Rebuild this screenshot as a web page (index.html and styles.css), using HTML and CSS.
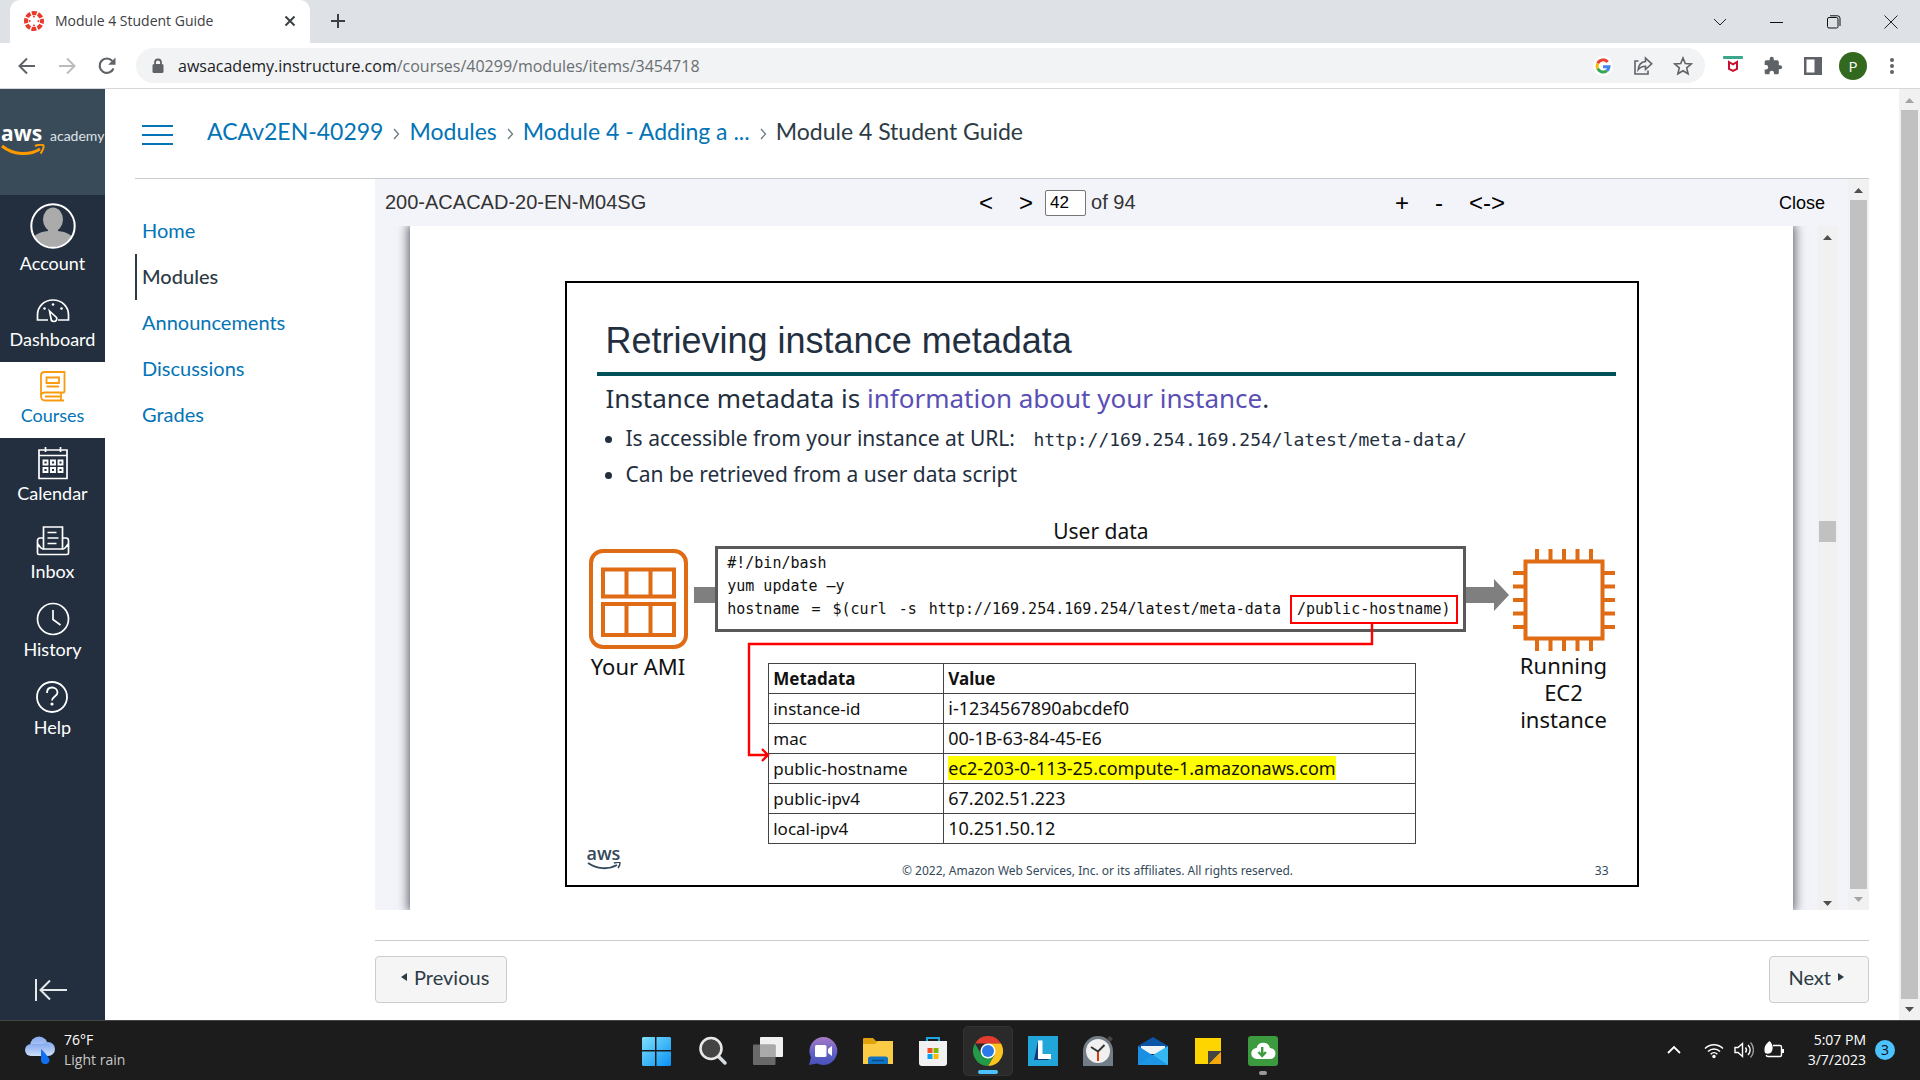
FILE: index.html
```html
<!DOCTYPE html>
<html lang="en">
<head>
<meta charset="utf-8">
<title>Module 4 Student Guide</title>
<link rel="stylesheet" href="styles.css">
</head>
<body>
<div class="screen">
  <header class="tabstrip">
    <div class="tab">
      <svg width="20" height="20" viewBox="0 0 20 20"><circle cx="10" cy="10" r="8" fill="none" stroke="#e8392b" stroke-width="4" stroke-dasharray="4.9 1.38" stroke-dashoffset="2.4"/><g fill="#e8392b"><circle cx="10" cy="5.6" r="1"/><circle cx="10" cy="14.4" r="1"/><circle cx="5.6" cy="10" r="1"/><circle cx="14.4" cy="10" r="1"/></g></svg>
      <span class="tab-title">Module 4 Student Guide</span>
      <button class="plain" aria-label="Close tab"><svg width="12" height="12" viewBox="0 0 12 12"><path d="M1.5 1.5l9 9M10.5 1.5l-9 9" stroke="#3c4043" stroke-width="2"/></svg></button>
    </div>
    <button class="plain new-tab" aria-label="New tab"><svg width="16" height="16" viewBox="0 0 16 16"><path d="M8 1v14M1 8h14" stroke="#3c4043" stroke-width="2"/></svg></button>
    <div class="window-buttons">
      <button class="plain" aria-label="Search tabs"><svg width="14" height="14" viewBox="0 0 14 14"><path d="M1 4l6 6 6-6" fill="none" stroke="#222"/></svg></button>
      <button class="plain" aria-label="Minimize"><svg width="14" height="14" viewBox="0 0 14 14"><path d="M0 7.500h13" stroke="#111"/></svg></button>
      <button class="plain" aria-label="Restore"><svg width="14" height="14" viewBox="0 0 14 14"><rect x=".5" y="2.500" width="10.500" height="10.500" rx="1.500" fill="none" stroke="#111"/><path d="M3 .8h7.500a2.500 2.500 0 0 1 2.500 2.500V11" fill="none" stroke="#111"/></svg></button>
      <button class="plain" aria-label="Close window"><svg width="14" height="14" viewBox="0 0 14 14"><path d="M.5.5l13 13M13.500.5l-13 13" stroke="#222"/></svg></button>
    </div>
  </header>

  <div class="toolbar">
    <button class="plain" aria-label="Back"><svg width="20" height="20" viewBox="0 0 20 20"><path d="M18 10H3M10 2.500L2.500 10l7.500 7.500" fill="none" stroke="#5f6368" stroke-width="2"/></svg></button>
    <button class="plain" aria-label="Forward"><svg width="20" height="20" viewBox="0 0 20 20"><path d="M2 10h15M10 2.500l7.500 7.500-7.500 7.500" fill="none" stroke="#babcbe" stroke-width="2"/></svg></button>
    <button class="plain" aria-label="Reload"><svg width="20" height="20" viewBox="0 0 20 20"><path d="M16.500 12.500A7.200 7.200 0 1 1 15.300 5" fill="none" stroke="#5f6368" stroke-width="2.200"/><path d="M18.500 1.500v7.300h-7.300z" fill="#5f6368"/></svg></button>
    <div class="omnibox">
      <svg width="14" height="16" viewBox="0 0 14 16"><path d="M4 7V4.500a3 3 0 0 1 6 0V7" fill="none" stroke="#5f6368" stroke-width="1.800"/><rect x="1.500" y="6" width="11" height="9" rx="1.500" fill="#5f6368"/></svg>
      <div class="url">awsacademy.instructure.com<span>/courses/40299/modules/items/3454718</span></div>
      <button class="plain" aria-label="Search with Google"><svg width="20" height="20" viewBox="0 0 20 20"><circle cx="10" cy="10" r="10" fill="#fff"/><g fill="none" stroke-width="3"><path d="M14.700 6A6 6 0 0 0 4.700 7.300" stroke="#ea4335"/><path d="M4.700 7.300a6 6 0 0 0 0 5.400" stroke="#fbbc05"/><path d="M4.700 12.700a6 6 0 0 0 9.300 1.900" stroke="#34a853"/><path d="M14 14.600a6 6 0 0 0 2-3.800h-6" stroke="#4285f4"/></g></svg></button>
      <button class="plain" aria-label="Share"><svg width="20" height="20" viewBox="0 0 20 20"><g fill="none" stroke="#5f6368" stroke-width="1.600"><path d="M5.500 5H2v13h13v-3.500"/><path d="M12.500 5.500V2l6.200 5.800-6.200 5.700v-3.300c-3.500 0-5.500 1-7.300 3.300.4-4.200 2.800-7.500 7.300-8z"/></g></svg></button>
      <button class="plain" aria-label="Bookmark"><svg width="20" height="20" viewBox="0 0 20 20"><path d="M10 2l2.300 5.500 6 .5-4.600 3.900 1.400 5.900L10 14.700l-5.100 3.100 1.400-5.900L1.700 8l6-.5z" fill="none" stroke="#5f6368" stroke-width="1.600"/></svg></button>
    </div>
    <div class="extensions">
      <button class="plain" aria-label="Site safety"><svg width="20" height="20" viewBox="0 0 20 20"><rect width="20" height="3" rx="1" fill="#3da58a"/><path d="M6 6l4 2.300L14 6v7l-4 2-4-2z" fill="none" stroke="#c8102e" stroke-width="2"/></svg></button>
      <button class="plain" aria-label="Extensions"><svg width="20" height="20" viewBox="0 0 24 24"><path d="M20.500 11H19V7a2 2 0 0 0-2-2h-4V3.500a2.500 2.500 0 0 0-5 0V5H4a2 2 0 0 0-2 2v3.800h1.500a2.700 2.700 0 0 1 0 5.400H2V20a2 2 0 0 0 2 2h3.800v-1.500a2.700 2.700 0 0 1 5.400 0V22H17a2 2 0 0 0 2-2v-4h1.500a2.500 2.500 0 0 0 0-5z" fill="#5f6368"/></svg></button>
      <button class="plain" aria-label="Side panel"><svg width="20" height="20" viewBox="0 0 20 20"><path d="M1 1h18v18H1zM3.500 3.500v13h8v-13z" fill="#5f6368" fill-rule="evenodd"/></svg></button>
      <button class="plain avatar" aria-label="Profile">P</button>
      <button class="plain" aria-label="Menu"><svg width="6" height="18" viewBox="0 0 6 18"><g fill="#5f6368"><circle cx="3" cy="3" r="2"/><circle cx="3" cy="9" r="2"/><circle cx="3" cy="15" r="2"/></g></svg></button>
    </div>
  </div>

  <div class="page">
    <nav class="rail" aria-label="Global">
      <a class="brand" href="#">
        <span class="aws"><b>aws</b><svg width="44" height="12" viewBox="0 0 44 12"><path d="M1 2c11 9 27 10 38 3" fill="none" stroke="#f90" stroke-width="3"/><path d="M34 2c4-2 8-1.500 8.500-.5s-.5 5-3 8" fill="none" stroke="#f90" stroke-width="2"/></svg></span>
        <span class="academy">academy</span>
      </a>
      <a class="rail-item account" href="#"><svg width="46" height="46" viewBox="0 0 46 46"><defs><clipPath id="face"><circle cx="23" cy="23" r="21"/></clipPath></defs><g clip-path="url(#face)" fill="#ababab"><ellipse cx="23" cy="16.500" rx="10" ry="12"/><path d="M18 24h10v4c9 1 14 4 15 8v12H3V36c1-4 6-7 15-8z"/></g><circle cx="23" cy="23" r="21.700" fill="none" stroke="#fff" stroke-width="2"/></svg><span>Account</span></a>
      <a class="rail-item" href="#"><svg width="34" height="32" viewBox="0 0 34 32"><g fill="none" stroke="#fff" stroke-width="1.700"><path d="M12 26H1.500v-5C1.500 12.500 8 6 17 6s15.500 6.500 15.500 15v5H22"/><path d="M13.500 17l7 6.500c1 2-.5 4-2.500 4s-3-1.500-3-3z"/></g><g fill="#fff"><circle cx="17" cy="10.500" r="1.300"/><circle cx="8.500" cy="14.500" r="1.300"/><circle cx="25.500" cy="14.500" r="1.300"/></g></svg><span>Dashboard</span></a>
      <a class="rail-item current" href="#"><svg width="34" height="32" viewBox="0 0 34 32"><g fill="none" stroke="#f99b11" stroke-width="1.800"><path d="M28.500 22.500V2H9C6 2 5 3.500 5 5.500V26c0 3 1.500 4.500 4 4.500h19M5 26c0-2.500 1.500-3.500 4-3.500h19.500M9 26.500h15M25 23v7"/><path d="M10.500 7.500h12.500v5.500H10.500zM10.500 16.500h12.500"/></g></svg><span>Courses</span></a>
      <a class="rail-item" href="#"><svg width="34" height="34" viewBox="0 0 34 34"><g fill="none" stroke="#fff" stroke-width="1.700"><path d="M3 4h28v28.500H3zM3 9.500h28M9.500 1v5M24.500 1v5"/><path d="M7.500 14.500h4v4h-4zM15 14.500h4v4h-4zM22.500 14.500h4v4h-4zM7.500 22h4v4h-4zM15 22h4v4h-4zM22.500 22h4v4h-4z" stroke-width="1.900"/></g></svg><span>Calendar</span></a>
      <a class="rail-item" href="#"><svg width="34" height="34" viewBox="0 0 34 34"><g fill="none" stroke="#fff" stroke-width="1.700"><path d="M7.500 25V3h19v22z"/><path d="M7.500 14H4a2.500 2.500 0 0 0-2.500 2.500V29c0 1 .5 1.500 1.500 1.500h28c1 0 1.500-.5 1.500-1.500V16.500A2.500 2.500 0 0 0 30 14h-3.500M1.500 19.500l3 4c1 1.200 2 1.500 3 1.500M32.500 19.500l-3 4c-1 1.200-2 1.500-3 1.500M11.500 8.500h9M11.500 14h11M11.500 19.500h9"/></g></svg><span>Inbox</span></a>
      <a class="rail-item" href="#"><svg width="34" height="34" viewBox="0 0 34 34"><g fill="none" stroke="#fff" stroke-width="1.700"><circle cx="17" cy="17" r="15.500"/><path d="M17 8v9.500l7.500 5.500"/></g></svg><span>History</span></a>
      <a class="rail-item" href="#"><svg width="34" height="34" viewBox="0 0 34 34"><g fill="none" stroke="#fff" stroke-width="1.800"><circle cx="16" cy="17" r="15"/><path d="M11 13c0-3.500 2-5.500 5-5.500s5.500 2 5.500 5c0 4-5.500 4-5.500 8"/></g><circle cx="16" cy="24" r="1.600" fill="#fff"/></svg><span>Help</span></a>
      <button class="plain collapse" aria-label="Minimize navigation"><svg width="34" height="24" viewBox="0 0 34 24"><path d="M2 1v22M33 12H7M16 2.500L6.500 12l9.500 9.500" fill="none" stroke="#e6e8ea" stroke-width="2"/></svg></button>
    </nav>

    <div class="main">
      <div class="crumbs">
        <button class="plain hamburger" aria-label="Course navigation"><svg width="31" height="20" viewBox="0 0 31 20"><path d="M0 1h31M0 10h31M0 19h31" stroke="#0374b5" stroke-width="1.800"/></svg></button>
        <a href="#">ACAv2EN-40299</a><svg class="sep" width="7" height="12" viewBox="0 0 7 12"><path d="M1 1l4.500 5L1 11" fill="none" stroke="#6b7780" stroke-width="1.300"/></svg><a href="#">Modules</a><svg class="sep" width="7" height="12" viewBox="0 0 7 12"><path d="M1 1l4.500 5L1 11" fill="none" stroke="#6b7780" stroke-width="1.300"/></svg><a href="#">Module 4 - Adding a ...</a><svg class="sep" width="7" height="12" viewBox="0 0 7 12"><path d="M1 1l4.500 5L1 11" fill="none" stroke="#6b7780" stroke-width="1.300"/></svg><span>Module 4 Student Guide</span>
      </div>
      <div class="columns">
        <nav class="course-nav" aria-label="Course">
          <a href="#">Home</a>
          <a class="active" href="#">Modules</a>
          <a href="#">Announcements</a>
          <a href="#">Discussions</a>
          <a href="#">Grades</a>
        </nav>
        <main class="content">
          <section class="viewer">
            <div class="viewer-main">
              <div class="viewer-bar">
                <div class="doc-name">200-ACACAD-20-EN-M04SG</div>
                <div class="pager">
                  <button class="plain">&lt;</button>
                  <button class="plain">&gt;</button>
                  <label><input type="text" value="42" aria-label="Page"> of 94</label>
                </div>
                <div class="zoomer">
                  <button class="plain">+</button>
                  <button class="plain">-</button>
                  <button class="plain">&lt;-&gt;</button>
                </div>
                <button class="plain close">Close</button>
              </div>
              <div class="viewer-body">
                <div class="paper">
                  <article class="slide">
                    <h1>Retrieving instance metadata</h1>
                    <p class="lead">Instance metadata is <em>information about your instance</em>.</p>
                    <ul>
                      <li>Is accessible from your instance at URL: <code>http://169.254.169.254/latest/meta-data/</code></li>
                      <li>Can be retrieved from a user data script</li>
                    </ul>
                    <div class="diagram">
                      <div class="node ami">
                        <svg width="99" height="100" viewBox="0 0 99 100"><g fill="none" stroke="#df6b15" stroke-width="4"><rect x="2" y="2" width="95" height="96" rx="12"/><path d="M14 20.500h71v27H14zM37.500 20.500v27M61.500 20.500v27M14 55h71v31H14zM37.500 55v31M61.500 55v31"/></g></svg>
                        <span>Your AMI</span>
                      </div>
                      <div class="shaft"></div>
                      <div class="middle">
                        <h2>User data</h2>
                        <div class="script">
                          <div>#!/bin/bash</div>
                          <div>yum update –y</div>
                          <div class="command"><span>hostname</span><span>=</span><span>$(curl</span><span>-s</span><span>http://169.254.169.254/latest/meta-data</span><span class="path">/public-hostname)</span></div>
                        </div>
                        <table>
                          <thead><tr><th>Metadata</th><th>Value</th></tr></thead>
                          <tbody>
                            <tr><td>instance-id</td><td>i-1234567890abcdef0</td></tr>
                            <tr><td>mac</td><td>00-1B-63-84-45-E6</td></tr>
                            <tr><td>public-hostname</td><td><mark>ec2-203-0-113-25.compute-1.amazonaws.com</mark></td></tr>
                            <tr><td>public-ipv4</td><td>67.202.51.223</td></tr>
                            <tr><td>local-ipv4</td><td>10.251.50.12</td></tr>
                          </tbody>
                        </table>
                        <svg class="connector" width="748" height="240" viewBox="0 0 748 240"><path d="M657 106v21H34v111h18M47 232l6 6-6 6" fill="none" stroke="#f00" stroke-width="2.400"/></svg>
                      </div>
                      <svg class="arrow" width="44" height="32" viewBox="0 0 44 32"><path d="M0 8h28V0l15 16-15 16v-8H0z" fill="#7f7f7f"/></svg>
                      <div class="node ec2">
                        <svg width="102" height="102" viewBox="0 0 102 102"><g fill="none" stroke="#df6b15" stroke-width="4"><path d="M12.500 12.500h77v77h-77z"/><path d="M24 0v12M37.500 0v12M51 0v12M64.500 0v12M78 0v12M24 90v12M37.500 90v12M51 90v12M64.500 90v12M78 90v12M0 24h12M0 37.500h12M0 51h12M0 64.500h12M0 78h12M90 24h12M90 37.500h12M90 51h12M90 64.500h12M90 78h12"/></g></svg>
                        <span>Running EC2 instance</span>
                      </div>
                    </div>
                    <footer class="slide-foot">
                      <span class="aws small"><b>aws</b><svg width="34" height="8" viewBox="0 0 34 8"><path d="M1 1c9 6 20 7 29 2" fill="none" stroke="#34495a" stroke-width="2"/><path d="M27 1c4-1.300 6-1 6 0s-.5 3-2 5" fill="none" stroke="#34495a" stroke-width="1.500"/></svg></span>
                      <span>© 2022, Amazon Web Services, Inc. or its affiliates. All rights reserved.</span>
                      <span class="num">33</span>
                    </footer>
                  </article>
                </div>
                <div class="scrollbar inner">
                  <svg width="21" height="21" viewBox="0 0 21 21"><path d="M10.500 9l4.500 5H6z" fill="#505050"/></svg>
                  <div class="thumb"></div>
                  <svg class="end" width="21" height="21" viewBox="0 0 21 21"><path d="M10.500 17L15 12H6z" fill="#505050"/></svg>
                </div>
              </div>
            </div>
            <div class="scrollbar outer">
              <svg width="21" height="21" viewBox="0 0 21 21"><path d="M10.500 9l4.500 5H6z" fill="#505050"/></svg>
              <div class="thumb"></div>
              <svg width="21" height="21" viewBox="0 0 21 21"><path d="M10.500 13L15 8H6z" fill="#a3a3a3"/></svg>
            </div>
          </section>
          <div class="sequence">
            <button><svg width="6" height="8" viewBox="0 0 6 8"><path d="M6 0v8L0 4z" fill="#2d3b45"/></svg>Previous</button>
            <button>Next<svg width="6" height="8" viewBox="0 0 6 8"><path d="M0 0v8l6-4z" fill="#2d3b45"/></svg></button>
          </div>
        </main>
      </div>
    </div>
    <div class="scrollbar window">
      <svg width="21" height="21" viewBox="0 0 21 21"><path d="M10.500 9l4.500 5H6z" fill="#a3a3a3"/></svg>
      <div class="thumb"></div>
      <svg width="21" height="21" viewBox="0 0 21 21"><path d="M10.500 13L15 8H6z" fill="#505050"/></svg>
    </div>
  </div>

  <footer class="taskbar">
    <button class="plain weather">
      <svg width="32" height="28" viewBox="0 0 32 28"><defs><linearGradient id="cl" x1="0" y1="0" x2="0" y2="1"><stop offset="0" stop-color="#86aaf0"/><stop offset="1" stop-color="#cfdff8"/></linearGradient></defs><g fill="url(#cl)"><circle cx="15" cy="9.500" r="9"/><circle cx="24" cy="13" r="7"/><rect x="1" y="8" width="26" height="12" rx="6"/></g><path d="M17 13c5 5 8.500 9 8.500 11.500a4.300 4.300 0 0 1-8.500 0z" fill="#0f6fee"/></svg>
      <span><span>76°F</span><span class="dim">Light rain</span></span>
    </button>
    <div class="apps">
      <button class="plain start" aria-label="Start"><svg width="30" height="30" viewBox="0 0 30 30"><defs><linearGradient id="wn" gradientUnits="userSpaceOnUse" x1="1" y1="1" x2="29" y2="30"><stop offset="0" stop-color="#7ee0fb"/><stop offset="1" stop-color="#0a93f5"/></linearGradient></defs><path d="M2 1h12v13H1V2zM15.500 1H29l1 1v12H15.500zM1 15.500h13V30H2l-1-1zM15.500 15.500H30V29l-1 1H15.500z" fill="url(#wn)"/></svg></button>
      <button class="plain" aria-label="Search"><svg width="30" height="30" viewBox="0 0 30 30"><path d="M20 20l7 7" stroke="#d6dade" stroke-width="3.500" stroke-linecap="round"/><circle cx="13" cy="12.500" r="10.500" fill="#444" stroke="#e6e8ea" stroke-width="2.600"/></svg></button>
      <button class="plain" aria-label="Task view"><svg width="30" height="30" viewBox="0 0 30 30"><rect x="7" y="1" width="23" height="20" rx="1" fill="#f0f0f0"/><rect y="8.500" width="22.500" height="20.500" rx="1" fill="#777" opacity=".85"/><path d="M7 9h15.500v12H7z" fill="#aaa"/></svg></button>
      <button class="plain" aria-label="Chat"><svg width="30" height="30" viewBox="0 0 30 30"><defs><linearGradient id="ch" x1="0" y1="0" x2="0" y2="1"><stop offset="0" stop-color="#a87bc4"/><stop offset=".6" stop-color="#5d5fc8"/><stop offset="1" stop-color="#4a50b8"/></linearGradient></defs><path d="M15 1a14 14 0 1 1-6 26.500L1 29l2-7.500A14 14 0 0 1 15 1z" fill="url(#ch)"/><rect x="7" y="9" width="11.500" height="12" rx="1.500" fill="#fff"/><path d="M20 13l4-3v10l-4-3z" fill="#fff"/></svg></button>
      <button class="plain" aria-label="File Explorer"><svg width="30" height="30" viewBox="0 0 30 30"><path d="M0 3.500C0 2 .5 2 1.500 2H10l3 3h15v8H0z" fill="#e0a10b"/><path d="M0 8h12l3-3h15v23H0z" fill="#fccb45"/><path d="M5 28v-5c0-1.500.8-2.500 2.500-2.500h15c1.700 0 2.500 1 2.500 2.500v5z" fill="#1173c4"/><path d="M9 24.500h12" stroke="#0a4a86" stroke-width="1.300"/></svg></button>
      <button class="plain" aria-label="Microsoft Store"><svg width="30" height="30" viewBox="0 0 30 30"><path d="M9 8V2h12v6" fill="none" stroke="#1ca7e0" stroke-width="2"/><path d="M1 5h28v22a3 3 0 0 1-3 3H4a3 3 0 0 1-3-3z" fill="#f1f1f1"/><path d="M9.500 12h5v5h-5z" fill="#f25022"/><path d="M15.500 12h5v5h-5z" fill="#7fba00"/><path d="M9.500 18h5v5h-5z" fill="#00a4ef"/><path d="M15.500 18h5v5h-5z" fill="#ffb900"/></svg></button>
      <button class="plain active" aria-label="Google Chrome"><svg width="30" height="30" viewBox="0 0 30 30"><path d="M2 7.500A15 15 0 0 1 28 7.500H15z" fill="#e33b2e"/><path d="M28 7.500A15 15 0 0 1 15 30l6.500-11.300L15 7.500z" fill="#fcc31e"/><path d="M2 7.500A15 15 0 0 0 15 30l6.500-11.300H8.500z" fill="#239a48"/><circle cx="15" cy="15" r="7.500" fill="#fff"/><circle cx="15" cy="15" r="6" fill="#2b79e8"/></svg></button>
      <button class="plain" aria-label="Lexia"><svg width="30" height="30" viewBox="0 0 30 30"><path d="M0 0h30v30H0z" fill="#22a5d8"/><path d="M10 5l-4 19h14l2-2H12z" fill="#113a78"/><path d="M10 4.500h4.500V18H23v5H10z" fill="#fff"/></svg></button>
      <button class="plain" aria-label="Clock"><svg width="30" height="30" viewBox="0 0 30 30"><path d="M24 2l3-2 3 3-3 3z" fill="#444"/><path d="M0 15a15 15 0 0 1 30 0v15H0z" fill="#727d88"/><circle cx="15" cy="15" r="12" fill="#f0f0f0"/><path d="M8 11l7 4.500 6.500-6.500" fill="none" stroke="#333" stroke-width="2"/><path d="M15 16v9" stroke="#d83b01" stroke-width="2"/></svg></button>
      <button class="plain" aria-label="Mail"><svg width="30" height="30" viewBox="0 0 30 30"><path d="M0 10L15 1l15 9v3H0z" fill="#0a55a5"/><path d="M3 10h24v8H3z" fill="#f0f3f6"/><path d="M0 10l30 19H0z" fill="#1a8fe3"/><path d="M30 10v19H4l11-10z" fill="#34b7f2"/><path d="M15 19L0 29h30z" fill="#1e96e6"/></svg></button>
      <button class="plain" aria-label="Sticky Notes"><svg width="30" height="30" viewBox="0 0 30 30"><path d="M2 2h26v26H2z" fill="#ffd500"/><path d="M15 15h13v1L16 28h-1z" fill="#444"/><path d="M28 16v12H16z" fill="#f5a80c"/></svg></button>
      <button class="plain running" aria-label="Cloud download"><svg width="30" height="30" viewBox="0 0 30 30"><rect width="30" height="30" rx="3" fill="#3c9b3f"/><path d="M9 23a5.500 5.500 0 0 1-.5-11 7 7 0 0 1 13.500 0 5.500 5.500 0 0 1 0 11z" fill="#fff"/><path d="M14.200 11v8M10.500 16l3.700 4 3.700-4" fill="none" stroke="#3c9b3f" stroke-width="2.400"/></svg></button>
    </div>
    <div class="tray">
      <button class="plain" aria-label="Hidden icons"><svg width="14" height="10" viewBox="0 0 14 10"><path d="M1 8l6-6 6 6" fill="none" stroke="#fff" stroke-width="1.800"/></svg></button>
      <button class="plain status" aria-label="Network, volume, battery">
        <svg width="20" height="18" viewBox="0 0 20 18"><g fill="none" stroke="#fff" stroke-width="1.500"><path d="M1 7.500a12.700 12.700 0 0 1 18 0M4 10.500a8.500 8.500 0 0 1 12 0M6.700 13.200a4.700 4.700 0 0 1 6.600 0"/></g><circle cx="10" cy="15.500" r="1.700" fill="#fff"/></svg>
        <svg width="20" height="18" viewBox="0 0 20 18"><g fill="none" stroke="#fff" stroke-width="1.400"><path d="M1 6.500h3L8.500 2.500v13L4 11.500H1zM11.500 6.500a4 4 0 0 1 0 5M14 4a7 7 0 0 1 0 10"/><path d="M16.500 1.500a11 11 0 0 1 0 15" stroke="#999"/></g></svg>
        <svg width="20" height="18" viewBox="0 0 20 18"><path d="M9 4.500h7c1 0 1.500.5 1.500 1.500v8c0 1-.5 1.500-1.500 1.500H4c-1 0-1.700-.5-1.700-1.500" fill="none" stroke="#fff" stroke-width="1.400"/><path d="M18 8h2v4h-2zM5.500 0C9 3 9.500 8 7.500 11c-1 1.500-4 2.500-6.500 1C-.5 7 1 3.500 5.500 0z" fill="#fff"/></svg>
      </button>
      <button class="plain clock"><span>5:07 PM</span><span>3/7/2023</span></button>
      <button class="plain badge" aria-label="Notifications">3</button>
    </div>
  </footer>
</div>
</body>
</html>
```
FILE: styles.css
```css
* { box-sizing: border-box; }
body { margin: 0; font-family: Lato, "Liberation Sans", sans-serif; color: #2d3b45; background: #fff; }
svg { display: block; flex: none; }
a { text-decoration: none; color: #0374b5; }
h1, h2, p, ul { margin: 0; padding: 0; font-weight: normal; }
.plain { border: 0; padding: 0; margin: 0; background: none; font: inherit; color: inherit; display: flex; align-items: center; justify-content: center; }

.screen { display: flex; flex-direction: column; min-height: 100vh; }

/* Browser frame */
.tabstrip { display: flex; align-items: center; height: 43px; background: #dee1e6; font: 14px "Open Sans", "Noto Sans", sans-serif; color: #3c4043; }
.tab { display: flex; align-items: center; gap: 11px; width: 300px; height: 43px; margin-left: 10px; padding: 0 14px 2px; background: #fff; border-radius: 10px 10px 0 0; }
.tab-title { flex: 1; white-space: nowrap; }
.new-tab { margin: 0 0 2px 20px; }
.window-buttons { display: flex; gap: 43px; margin-left: auto; padding-right: 22px; height: 38px; }
.toolbar { display: flex; align-items: center; height: 46px; padding-left: 17px; gap: 20px; border-bottom: 1px solid #d5d7da; font-family: "Open Sans", "Noto Sans", sans-serif; }
.omnibox { flex: 1; display: flex; align-items: center; gap: 20px; height: 35px; margin-left: -1px; padding: 0 12px 0 15px; border-radius: 18px; background: #f1f3f4; }
.url { flex: 1; margin-left: -7px; font-size: 16px; color: #202124; white-space: nowrap; }
.url span { color: #6a6e72; }
.extensions { display: flex; align-items: center; gap: 20px; padding: 0 25px 0 0; margin-left: -2px; }
.avatar { width: 28px; height: 28px; margin: 0 2px 0 -4px; border-radius: 50%; background: #33691e; color: #fff; font-size: 15px; }

/* Scrollbars */
.scrollbar { display: flex; flex-direction: column; flex: none; width: 21px; background: #f1f1f1; }
.thumb { flex: 1; margin: 0 2px; background: #c1c1c1; }

/* Canvas navigation */
.page { flex: 1; display: flex; min-height: 0; }
.rail { display: flex; flex-direction: column; flex: none; width: 105px; background: #232f3e; }
.brand { display: flex; align-items: center; gap: 7px; height: 106px; padding: 0 0 7px 1px; background: #394b58; color: #fff; }
.aws { display: flex; flex-direction: column; flex: none; width: 42px; }
.aws b { font: bold 21px/22px "Open Sans", sans-serif; }
.academy { padding-bottom: 5px; font-size: 14px; line-height: 20px; color: #dfe3e6; }
.rail-item { display: flex; flex-direction: column; align-items: center; gap: 1px; padding: 8px 0 11px; font-size: 18px; line-height: 24px; color: #fff; }
.rail-item.account { gap: 2px; }
.rail-item.current { background: #fff; color: #0374b5; }
.collapse { margin: auto 0 18px 34px; align-self: flex-start; }

.main { flex: 1; min-width: 0; display: flex; flex-direction: column; padding: 0 30px; }
.crumbs { display: flex; align-items: center; height: 90px; padding: 0 0 5px 7px; border-bottom: 1px solid #c7cdd1; font-size: 23px; white-space: nowrap; }
.hamburger { margin: 7px 34px 0 0; }
.sep { margin: 6px 9px 0 10px; }
.columns { flex: 1; display: flex; }
.course-nav { flex: none; width: 240px; padding-top: 29px; font-size: 20px; line-height: 44px; }
.course-nav a { display: block; padding: 0 0 2px 7px; }
.course-nav .active { padding-left: 5px; border-left: 2px solid #2d3b45; color: #2d3b45; font-weight: 500; }
.content { flex: 1; min-width: 0; display: flex; flex-direction: column; }

/* Document viewer */
.viewer { flex: 1; display: flex; background: #f3f4f9; }
.viewer-main { flex: 1; min-width: 0; display: flex; flex-direction: column; font-family: "Liberation Sans", sans-serif; }
.viewer-bar { display: grid; grid-template-columns: 594px 416px auto 1fr; align-items: center; height: 47px; padding: 0 23px 0 10px; font-size: 20px; color: #333; }
.viewer-bar button { color: #000; font-size: 24px; line-height: 28px; }
.pager, .zoomer { display: flex; align-items: center; gap: 26px; }
.pager label { display: flex; align-items: center; gap: 5px; margin-left: -14px; }
.pager input { width: 41px; height: 26px; padding: 0 4px; border: 1px solid #767676; border-radius: 2px; background: #fff; font: 17px "Liberation Sans", sans-serif; }
.viewer-bar .close { justify-self: end; font-size: 18px; }
.viewer-body { flex: 1; display: flex; overflow: hidden; padding: 0 10px 0 35px; }
.paper { flex: 1; background: #fff; box-shadow: 0 0 10px 2px #60646c; padding-top: 55px; }
.inner { margin-left: 24px; }
.inner .thumb { flex: none; height: 21px; margin-top: 274px; }
.inner .end { margin-top: auto; }

/* Slide */
.slide { max-width: 1074px; height: 606px; margin: 0 auto; padding: 36px 0 0; border: 2px solid #000; color: #232f3e; font-family: "Noto Sans", "Open Sans", sans-serif; white-space: nowrap; }
.slide h1 { margin: 0 21px 0 30px; padding: 0 0 9px 9px; border-bottom: 4px solid #00505a; font: 36px/44px "Liberation Sans", sans-serif; }
.lead { margin: 6px 0 6px 39px; font-size: 26px; line-height: 32px; }
.lead em { font-style: normal; color: #5a4fb5; }
.slide ul { padding-left: 59px; font-size: 21px; line-height: 36px; }
.slide code { margin-left: 13px; font: 18px "DejaVu Sans Mono", monospace; }
.diagram { display: flex; margin: 25px 22px 0; color: #111; }
.node { display: flex; flex-direction: column; align-items: center; gap: 4px; padding-top: 32px; font-size: 22px; line-height: 27px; text-align: center; }
.ami { width: 99px; }
.ec2 { width: 102px; gap: 1px; margin-left: 3px; white-space: normal; }
.ec2 span { width: 92px; }
.shaft { width: 24px; height: 16px; margin: 70px 0 0 6px; background: #7f7f7f; }
.arrow { margin-top: 62px; }
.middle { flex: 1; position: relative; }
.middle h2 { padding: 0 0 1px 21px; font-size: 21px; line-height: 28px; text-align: center; }
.script { height: 86px; padding: 3px 8px 0 9px; border: 3px solid #595959; font: 15px/23px "DejaVu Sans Mono", monospace; }
.command { display: flex; gap: 12px; }
.path { margin-left: auto; padding: 0 4px; outline: 2px solid #f00; outline-offset: 1px; }
.connector { position: absolute; left: 0; top: 0; overflow: visible; }
.slide table { width: 648px; margin: 31px 0 0 53px; border-collapse: collapse; table-layout: fixed; font-size: 17px; line-height: 23px; }
.slide th, .slide td { height: 30px; padding: 0 4px; border: 1px solid #444; text-align: left; }
.slide td:last-child { font-size: 18px; }
.slide th:first-child { width: 175px; }
.slide mark { background: #ff0; color: inherit; }
.slide-foot { display: grid; grid-template-columns: 1fr auto 1fr; align-items: end; height: 35px; padding: 0 28px 0 20px; font-size: 12px; line-height: 16px; color: #34495a; }
.slide-foot .num { text-align: right; }
.slide-foot .small { align-self: start; width: 34px; }
.aws.small b { font-size: 18px; line-height: 18px; font-weight: 600; }

/* Module sequence */
.sequence { display: flex; justify-content: space-between; margin-top: 30px; padding: 15px 0 17px; border-top: 1px solid #c7cdd1; }
.sequence button { display: flex; align-items: center; gap: 7px; height: 47px; padding: 0 17px 5px 25px; border: 1px solid #c7cdd1; border-radius: 4px; background: #f5f5f5; font: 20px Lato, sans-serif; color: #2d3b45; }
.sequence button:last-child { padding: 0 24px 5px 18px; }

/* Taskbar */
.taskbar { display: grid; grid-template-columns: 1fr auto 1fr; align-items: center; height: 60px; border-top: 1px solid #444; background: #1c1c1c; color: #fff; font: 14px/20px "Open Sans", "Noto Sans", sans-serif; }
.weather { justify-self: start; gap: 8px; padding: 0 0 2px 24px; text-align: left; }
.weather span span, .clock span { display: block; }
.weather .dim { color: #c8c8c8; }
.apps { display: flex; gap: 5px; }
.apps button { position: relative; width: 50px; height: 50px; border-radius: 5px; }
.apps .start { margin: 0 2px 0 -2px; }
.apps .active { background: #2a2a2a; border: 1px solid #333; }
.apps .active::after, .apps .running::after { content: ""; position: absolute; bottom: 1px; width: 20px; height: 4px; border-radius: 2px; background: #4cc2ff; }
.apps .running::after { width: 8px; background: #999; }
.tray { display: flex; align-items: center; justify-self: end; padding: 0 25px 2px 0; }
.status { gap: 10px; margin: 0 24px 0 23px; }
.clock { flex-direction: column; align-items: flex-end; }
.badge { width: 20px; height: 20px; margin-left: 9px; border-radius: 50%; background: #4cc2ff; color: #111; }
```
